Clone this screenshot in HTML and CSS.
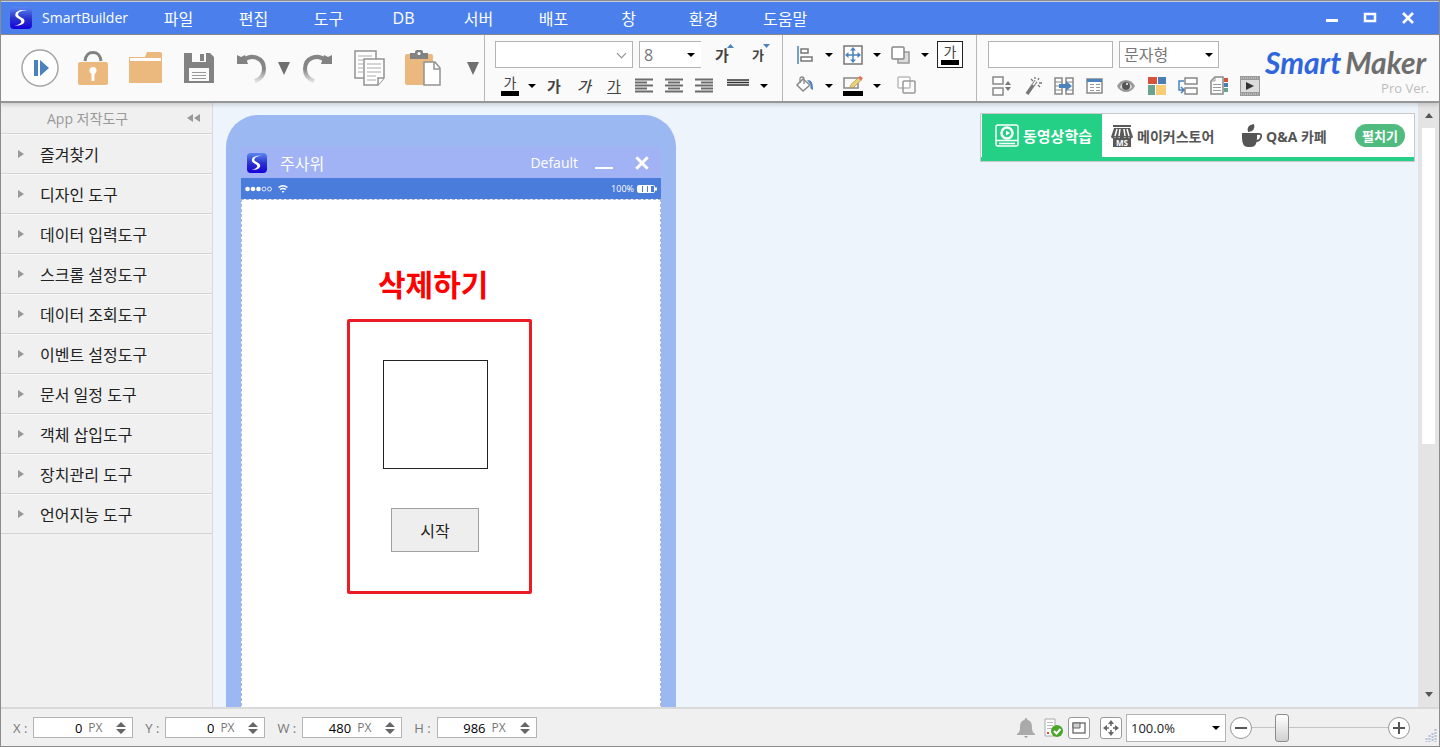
FILE: index.html
```html
<!DOCTYPE html>
<html lang="ko">
<head>
    <meta charset="UTF-8">
    <meta name="viewport" content="width=device-width, initial-scale=1.0">
    <title>SmartBuilder</title>
    <link rel="stylesheet" href="styles.css">
</head>
<body>
    <!-- Shared symbols -->
    <svg class="symbols" aria-hidden="true">
        <defs>
            <linearGradient id="logoFill" x1="0" y1="0" x2="0" y2="1">
                <stop offset="0" stop-color="#5b86f2"/>
                <stop offset="0.5" stop-color="#2a35cc"/>
                <stop offset="1" stop-color="#1600dc"/>
            </linearGradient>
            <linearGradient id="fadeDown" x1="0" y1="0" x2="0" y2="1">
                <stop offset="0.5" stop-color="#858585"/>
                <stop offset="1" stop-color="#dedede"/>
            </linearGradient>
            <symbol id="logo" viewBox="0 0 22 22">
                <rect width="22" height="22" rx="4" fill="url(#logoFill)"/>
                <path d="M17 3.500C11.500 3 8 5 8 7.500c0 2.500 6.500 3 6.500 6.500 0 3-4 5-10 4.500 4-.5 6.800-2 6.800-4.200 0-2.600-6-2.800-6-6.300C5.300 4.300 10.500 2 17 3.500z" fill="#fff"/>
            </symbol>
            <symbol id="close" viewBox="0 0 14 14">
                <path d="M2 2l10 10M12 2L2 12" stroke="#fff" stroke-width="2.600"/>
            </symbol>
        </defs>
    </svg>

    <div class="window">
        <!-- Title bar -->
        <header class="titlebar">
            <svg class="app-logo"><use href="#logo"/></svg>
            <h1 class="app-name">SmartBuilder</h1>
            <nav class="menu">
                <button class="menu-item">파일</button>
                <button class="menu-item">편집</button>
                <button class="menu-item">도구</button>
                <button class="menu-item">DB</button>
                <button class="menu-item">서버</button>
                <button class="menu-item">배포</button>
                <button class="menu-item">창</button>
                <button class="menu-item">환경</button>
                <button class="menu-item">도움말</button>
            </nav>
            <div class="window-controls">
                <button aria-label="최소화"><svg width="14" height="14"><path d="M1 9.500h12" stroke="#fff" stroke-width="3"/></svg></button>
                <button aria-label="최대화"><svg width="14" height="14"><rect x="2" y="3" width="10" height="7" fill="none" stroke="#fff" stroke-width="2.500"/></svg></button>
                <button aria-label="닫기"><svg width="14" height="14"><use href="#close"/></svg></button>
            </div>
        </header>

        <!-- Toolbar -->
        <div class="toolbar">
            <div class="tool-group group-main">
                <button class="tool-lg" aria-label="실행">
                    <svg width="38" height="38"><circle cx="19" cy="19" r="18" fill="#fff" stroke="#a6a6a6" stroke-width="1.500"/><path d="M13 11h4v16h-4zM19 11l9 8-9 8z" fill="#4a82bd"/></svg>
                </button>
                <button class="tool-lg" aria-label="잠금">
                    <svg width="32" height="36"><path d="M8 11C9 4 12 2.500 16 2.500S23 4 24 11" fill="none" stroke="#828282" stroke-width="3"/><rect x="1" y="12" width="30" height="23" rx="2" fill="#ebb97e"/><circle cx="16" cy="20.500" r="3.500" fill="#fff"/><path d="M14.500 22h3v9h-3z" fill="#fff"/></svg>
                </button>
                <button class="tool-lg" aria-label="열기">
                    <svg width="33" height="34"><path d="M0 6h16l2-5h13q2 0 2 2v29H0z" fill="#ebb97e"/><path d="M1 7h31v3H1z" fill="#fff"/></svg>
                </button>
                <button class="tool-lg" aria-label="저장">
                    <svg width="30" height="30"><path d="M0 0h26l4 4v26H0z" fill="#828282"/><path d="M8 0h14v9H8zM5 15h20v13H5z" fill="#fafafa"/><path d="M16 1h4v7h-4z" fill="#828282"/><path d="M8 19.500h14M8 22.500h14M8 25.500h14" stroke="#999"/></svg>
                </button>
                <button class="tool-lg" aria-label="실행 취소">
                    <svg width="30" height="30"><path d="M7 7C14 1 27 4 27 16c0 6-3 10-9 12" fill="none" stroke="url(#fadeDown)" stroke-width="4"/><path d="M0 2l4 2 4-2 3 9H0z" fill="#828282"/></svg>
                </button>
                <button class="tool-arrow" aria-label="실행 취소 목록"><svg width="12" height="13"><path d="M0 0h12L6 13z" fill="#6f6f6f"/></svg></button>
                <button class="tool-lg" aria-label="다시 실행">
                    <svg width="30" height="30"><path d="M23 7C16 1 3 4 3 16c0 6 3 10 9 12" fill="none" stroke="url(#fadeDown)" stroke-width="4"/><path d="M30 2l-4 2-4-2-3 9h11z" fill="#828282"/></svg>
                </button>
                <button class="tool-lg" aria-label="복사">
                    <svg width="31" height="36"><g fill="#fff" stroke="#929292" stroke-width="1.500"><path d="M1 1h21v27H1z"/><path d="M10 9h20v19l-6 7H10z"/><path d="M30 28h-6v7"/></g><path d="M4 6h14M4 10h5M4 14h5M4 18h5M4 22h5M13 14h14M13 18h14M13 22h14M13 26h9M13 30h9" stroke="#aaa"/></svg>
                </button>
                <button class="tool-lg" aria-label="붙여넣기">
                    <svg width="36" height="36"><rect x="0" y="4" width="28" height="31" rx="2" fill="#ebb97e"/><path d="M5 3h5V2q0-2 2-2h4q2 0 2 2v1h5v6H5z" fill="#828282"/><circle cx="14" cy="3.500" r="1.500" fill="#fff"/><path d="M19 12h11l5 6v17H19z" fill="#fff" stroke="#929292" stroke-width="1.500"/><path d="M29 12v7h6" fill="none" stroke="#929292" stroke-width="1.500"/></svg>
                </button>
                <button class="tool-arrow last" aria-label="붙여넣기 옵션"><svg width="12" height="13"><path d="M0 0h12L6 13z" fill="#6f6f6f"/></svg></button>
            </div>

            <!-- Text format -->
            <div class="tool-group group-text">
                <div class="tool-row">
                    <span class="drop drop-chevron font-name"><select aria-label="글꼴"><option></option></select></span>
                    <span class="drop font-size"><select aria-label="글꼴 크기"><option>8</option></select></span>
                    <button class="tool glyph glyph-bold resize" aria-label="글자 크게">가<svg width="7" height="4"><path d="M0 4h7L3.500 0z" fill="#4a82bd"/></svg></button>
                    <button class="tool glyph glyph-bold resize small" aria-label="글자 작게">가<svg width="7" height="4"><path d="M0 0h7L3.500 4z" fill="#4a82bd"/></svg></button>
                </div>
                <div class="tool-row tight">
                    <button class="tool glyph color-bar" aria-label="글자색">가</button>
                    <button class="caret" aria-label="글자색 선택"></button>
                    <button class="tool glyph glyph-bold" aria-label="굵게">가</button>
                    <button class="tool glyph glyph-italic" aria-label="기울임">가</button>
                    <button class="tool glyph" aria-label="밑줄"><u>가</u></button>
                    <button class="tool" aria-label="왼쪽 정렬"><svg width="18" height="16"><path d="M0 1.500h18M0 4.500h12M0 7.500h18M0 10.500h12M0 13.500h18" stroke="#6c6c6c" stroke-width="2"/></svg></button>
                    <button class="tool" aria-label="가운데 정렬"><svg width="18" height="16"><path d="M0 1.500h18M3 4.500h12M0 7.500h18M3 10.500h12M0 13.500h18" stroke="#6c6c6c" stroke-width="2"/></svg></button>
                    <button class="tool" aria-label="오른쪽 정렬"><svg width="18" height="16"><path d="M0 1.500h18M6 4.500h12M0 7.500h18M6 10.500h12M0 13.500h18" stroke="#6c6c6c" stroke-width="2"/></svg></button>
                    <button class="tool tool-wide" aria-label="선 모양"><svg width="22" height="14"><path d="M0 1h22M0 3.500h22M0 6h22" stroke="#333" stroke-width="1.500"/></svg></button>
                    <button class="caret" aria-label="선 모양 선택"></button>
                </div>
            </div>

            <!-- Object format -->
            <div class="tool-group group-object">
                <div class="tool-row tight">
                    <button class="tool" aria-label="맞춤"><svg width="18" height="18"><path d="M2 0v18" stroke="#4a82bd" stroke-width="1.500"/><path d="M5 3h7v4H5zM5 11h11v4H5z" fill="#fff" stroke="#777" stroke-width="1.500"/></svg></button>
                    <button class="caret" aria-label="맞춤 선택"></button>
                    <button class="tool" aria-label="크기 맞춤"><svg width="20" height="20"><rect x="1" y="1" width="18" height="18" fill="#fff" stroke="#777" stroke-width="1.500"/><path d="M10 4v12M4 10h12" stroke="#4a82bd" stroke-width="1.500"/><path d="M10 2l3 3.500H7zM10 18l3-3.500H7zM2 10l3.500-3v6zM18 10l-3.500-3v6z" fill="#4a82bd"/></svg></button>
                    <button class="caret" aria-label="크기 맞춤 선택"></button>
                    <button class="tool" aria-label="순서"><svg width="20" height="20"><rect x="7" y="7" width="11" height="11" fill="#ddd" stroke="#999" stroke-width="1.500"/><rect x="1" y="2" width="12" height="12" rx="1" fill="#fff" stroke="#888" stroke-width="1.500"/></svg></button>
                    <button class="caret" aria-label="순서 선택"></button>
                    <button class="tool glyph color-bar framed" aria-label="배경색">가</button>
                </div>
                <div class="tool-row tight">
                    <button class="tool" aria-label="채우기"><svg width="20" height="20"><path d="M8 3l7 6-7 6-6-6z" fill="#fff" stroke="#888" stroke-width="1.500"/><path d="M5 7V3q0-2 2-2t2 2v5" fill="none" stroke="#888" stroke-width="1.300"/><path d="M12 4c5 0 6 3 6 10-3-1-3-3-2-5z" fill="#4a82bd"/></svg></button>
                    <button class="caret" aria-label="채우기 선택"></button>
                    <button class="tool" aria-label="선 색"><svg width="20" height="20"><path d="M1 2h14v10H1z" fill="none" stroke="#888" stroke-width="1.500"/><path d="M7 12l1-3.500L16 1l3 2.500-8 7.500z" fill="#edd179" stroke="#a88f4c" stroke-width=".7"/><path d="M15 2l2-2 3 2-2 2.500z" fill="#dc7260"/><path d="M0 15h20v5H0z"/></svg></button>
                    <button class="caret" aria-label="선 색 선택"></button>
                    <button class="tool tool-object" aria-label="그룹"><svg width="20" height="20"><rect x="2" y="1" width="12" height="11" rx="1" fill="#fff" stroke="#bbb" stroke-width="1.500"/><rect x="7" y="5" width="12" height="12" rx="1" fill="none" stroke="#999" stroke-width="1.500"/></svg></button>
                </div>
            </div>

            <!-- Data and view -->
            <div class="tool-group group-data">
                <div class="tool-row">
                    <input class="name-input" type="text" aria-label="객체 이름">
                    <span class="drop data-type"><select aria-label="자료형"><option>문자형</option></select></span>
                </div>
                <div class="tool-row tight tool-strip">
                    <button class="tool-sm" aria-label="간격"><svg width="20" height="20"><path d="M1 1h10v7H1zM1 12h10v7H1z" fill="#fff" stroke="#888" stroke-width="1.500"/><path d="M13 9h6l-3-4zM13 11h6l-3 4z" fill="#777"/></svg></button>
                    <button class="tool-sm" aria-label="마법사"><svg width="18" height="20"><path d="M3 18L12 5" stroke="#777" stroke-width="3.500"/><path d="M9 9l3-4" stroke="#fff" stroke-width="1.500"/><path d="M7 3l2 2M11 1v2M15 2l-1 2M15 7h3M14 9l2 2" stroke="#777" stroke-width="1.300"/></svg></button>
                    <button class="tool-sm" aria-label="이동"><svg width="20" height="20"><path d="M1 2h7v16H1zM12 2h7v16h-7z" fill="#fff" stroke="#888" stroke-width="1.500"/><path d="M1 6h7M1 10h7M1 14h7M12 6h7M12 14h7" stroke="#888"/><path d="M5 8h7V5l6 5-6 5v-3H5z" fill="#4a82bd"/></svg></button>
                    <button class="tool-sm" aria-label="표"><svg width="18" height="18"><path d="M1 2h15v14H1z" fill="#fff" stroke="#888" stroke-width="1.500"/><path d="M1 3.500h15" stroke="#4a82bd" stroke-width="3"/><path d="M4 7.500h4M4 10.500h4M4 13.500h4M10 7.500h4M10 10.500h4M10 13.500h4" stroke="#999"/></svg></button>
                    <button class="tool-sm" aria-label="미리보기"><svg width="18" height="14"><path d="M0 7C4-1 14-1 18 7 14 15 4 15 0 7z" fill="#999"/><path d="M3 8C5 2 13 2 15 8c-2 4-10 4-12 0z" fill="#ddd"/><circle cx="9" cy="7" r="4" fill="#555"/><circle cx="10" cy="5" r="1" fill="#fff"/></svg></button>
                    <button class="tool-sm" aria-label="색상표"><svg width="18" height="18"><path d="M0 0h9v7H0z" fill="#d6523a"/><path d="M10 0h8v7h-8z" fill="#4a7eb5"/><path d="M0 8h7v10H0z" fill="#6aa38e"/><path d="M8 8h10v10H8z" fill="#f7cc74"/></svg></button>
                    <button class="tool-sm" aria-label="연결"><svg width="20" height="20"><path d="M7 2h12v6H7zM7 12h12v6H7z" fill="#fff" stroke="#888" stroke-width="1.500"/><path d="M6 5H1v9h4M3 11l3 3-3 3" fill="none" stroke="#4a82bd" stroke-width="1.500"/></svg></button>
                    <button class="tool-sm" aria-label="문서 정보"><svg width="18" height="20"><path d="M5 1h8v17H1V5z" fill="#fff" stroke="#888" stroke-width="1.500"/><path d="M5 1v4H1M3 8.500h8M3 11.500h8M3 14.500h8" fill="none" stroke="#999"/><path d="M14 2h4v4h-4z" fill="#d6523a"/><path d="M14 7h4v4h-4z" fill="#4a7eb5"/><path d="M14 12h4v4h-4z" fill="#6aa38e"/></svg></button>
                    <button class="tool-sm" aria-label="동영상"><svg width="20" height="20"><path d="M0 0h20v20H0z" fill="#999"/><path d="M1 4h18v12H1z" fill="#dcdcdc"/><path d="M1 2h18M1 18h18" stroke="#ddd" stroke-dasharray="1 1"/><path d="M6 6l8 4-8 4z" fill="#333"/></svg></button>
                </div>
            </div>

            <div class="brand">
                <div class="brand-name"><span class="brand-smart">Smart</span><span class="brand-maker">Maker</span></div>
                <div class="brand-edition">Pro Ver.</div>
            </div>
        </div>

        <div class="workspace">
            <!-- Tool palette -->
            <aside class="palette">
                <div class="palette-header">
                    <h2>App 저작도구</h2>
                    <button aria-label="접기"><svg width="14" height="8"><path d="M6 0v8L0 4zM13 0v8L7 4z" fill="#999"/></svg></button>
                </div>
                <button class="palette-item">즐겨찾기</button>
                <button class="palette-item">디자인 도구</button>
                <button class="palette-item">데이터 입력도구</button>
                <button class="palette-item">스크롤 설정도구</button>
                <button class="palette-item">데이터 조회도구</button>
                <button class="palette-item">이벤트 설정도구</button>
                <button class="palette-item">문서 일정 도구</button>
                <button class="palette-item">객체 삽입도구</button>
                <button class="palette-item">장치관리 도구</button>
                <button class="palette-item">언어지능 도구</button>
            </aside>

            <!-- Design canvas -->
            <main class="canvas">
                <section class="device">
                    <div class="form-title">
                        <svg class="form-logo"><use href="#logo"/></svg>
                        <span class="form-name">주사위</span>
                        <span class="form-layout">Default</span>
                        <button aria-label="최소화"><svg width="18" height="14"><path d="M0 12h18" stroke="#fff" stroke-width="2"/></svg></button>
                        <button aria-label="닫기"><svg width="16" height="16"><use href="#close"/></svg></button>
                    </div>
                    <div class="phone-status">
                        <svg width="44" height="12"><g fill="#fff"><circle cx="2.500" cy="6" r="2.300"/><circle cx="8" cy="6" r="2.300"/><circle cx="13.500" cy="6" r="2.300"/></g><g fill="none" stroke="#fff" stroke-width=".8"><circle cx="19" cy="6" r="2"/><circle cx="24.500" cy="6" r="2"/></g><path d="M33.500 4.500Q38 1 42.500 4.500M35 6.500q3-2 6 0" fill="none" stroke="#fff" stroke-width="1.400"/><path d="M36.500 8h3L38 10z" fill="#fff"/></svg>
                        <span class="battery">100%
                            <svg width="20" height="8"><rect x=".5" y=".5" width="17" height="7" rx="1" fill="none" stroke="#fff"/><path d="M1 1h4v6H1zM6 1h4v6H6zM11 1h3v6h-3zM18 2.500h2v3h-2z" fill="#fff"/></svg>
                        </span>
                    </div>
                    <div class="form">
                        <h2 class="note">삭제하기</h2>
                        <div class="note-frame"></div>
                        <div class="image-box"></div>
                        <button class="start-button">시작</button>
                    </div>
                </section>

                <nav class="banner">
                    <a class="banner-link video" href="#">
                        <svg width="24" height="24"><rect x="1" y="1" width="22" height="21" rx="2" fill="none" stroke="#fff" stroke-width="1.500"/><circle cx="12" cy="9" r="5.500" fill="none" stroke="#fff" stroke-width="2.500"/><path d="M11 6.500l4 2.500-4 2.500z" fill="#fff"/><path d="M1 16.500h22M4 19.500h16" stroke="#fff" stroke-width="1.300"/></svg>
                        동영상학습
                    </a>
                    <a class="banner-link store" href="#">
                        <svg width="22" height="22"><path d="M2 1h18" stroke="#595959" stroke-width="2"/><path d="M3 3h16l3 9q-2 3-4 0-2 3-4 0-3 3-6 0-2 3-4 0-2 3-4 0z" fill="#595959"/><path d="M6 4l-2 7M9 4l-1 7M13 4l1 7M16 4l2 7" stroke="#fff" stroke-width="1.500"/><path d="M2 13h18v9H2z" fill="#595959"/><text x="11" y="21" class="store-sign">MS</text></svg>
                        메이커스토어
                    </a>
                    <a class="banner-link cafe" href="#">
                        <svg width="20" height="24"><path d="M0 9h15v5q0 9-6 9H6q-6 0-6-9z" fill="#555"/><path d="M15 10q5-1 4 3-1 4-5 4" fill="none" stroke="#555" stroke-width="1.800"/><path d="M6 8Q4 1 12 0q2 7-6 8z" fill="#555"/></svg>
                        Q&amp;A 카페
                    </a>
                    <button class="banner-more">펼치기</button>
                </nav>
            </main>

            <div class="scrollbar">
                <button aria-label="위로"><svg width="8" height="5"><path d="M0 5h8L4 0z" fill="#555"/></svg></button>
                <div class="scroll-track"><div class="scroll-thumb"></div></div>
                <button aria-label="아래로"><svg width="8" height="5"><path d="M0 0h8L4 5z" fill="#555"/></svg></button>
            </div>
        </div>

        <!-- Status bar -->
        <footer class="statusbar">
            <div class="measure">
                <label for="posX">X :</label>
                <span class="measure-box"><input id="posX" type="text" value="0">PX<svg width="10" height="12"><path d="M0 5h10L5 0zM0 7h10l-5 5z" fill="#666"/></svg></span>
            </div>
            <div class="measure">
                <label for="posY">Y :</label>
                <span class="measure-box"><input id="posY" type="text" value="0">PX<svg width="10" height="12"><path d="M0 5h10L5 0zM0 7h10l-5 5z" fill="#666"/></svg></span>
            </div>
            <div class="measure">
                <label for="sizeW">W :</label>
                <span class="measure-box"><input id="sizeW" type="text" value="480">PX<svg width="10" height="12"><path d="M0 5h10L5 0zM0 7h10l-5 5z" fill="#666"/></svg></span>
            </div>
            <div class="measure">
                <label for="sizeH">H :</label>
                <span class="measure-box"><input id="sizeH" type="text" value="986">PX<svg width="10" height="12"><path d="M0 5h10L5 0zM0 7h10l-5 5z" fill="#666"/></svg></span>
            </div>

            <div class="status-tools">
                <button class="status-icon" aria-label="알림"><svg width="18" height="20"><path d="M9 0q1.500 0 1.500 2C15 3 15 7 15 11q0 3 3 5v1H0v-1q3-2 3-5c0-4 0-8 4.500-9Q7.500 0 9 0z" fill="#aaa"/><path d="M7 18h4l-2 2z" fill="#999"/></svg></button>
                <button class="status-icon" aria-label="검사"><svg width="20" height="20"><path d="M1 1h10v17H1z" fill="#fff" stroke="#aaa"/><path d="M3 4.500h6M3 7.500h6M3 10.500h6" stroke="#bbb"/><path d="M3 14h2v2H3z" fill="#e05030"/><circle cx="13" cy="13" r="6" fill="#4aa52c"/><path d="M10 13l2.500 2.500L16.500 11" fill="none" stroke="#fff" stroke-width="2"/></svg></button>
                <button class="status-button" aria-label="창 크기"><svg width="14" height="12"><rect x="1" y="1" width="12" height="10" fill="none" stroke="#666" stroke-width="1.300"/><path d="M1 1h7v5H1z" fill="#ccc" stroke="#666"/></svg></button>
                <button class="status-button pan" aria-label="이동"><svg width="16" height="16"><path d="M8 0l3 4H5zM8 16l3-4H5zM0 8l4-3v6zM16 8l-4-3v6z" fill="#666"/><path d="M8 4v2M8 10v2M4 8h2M10 8h2" stroke="#666" stroke-width="1.500"/></svg></button>
                <span class="drop zoom"><select aria-label="배율"><option>100.0%</option></select></span>
                <button class="zoom-button" aria-label="축소"><svg width="14" height="14"><path d="M1 7h12" stroke="#555" stroke-width="2"/></svg></button>
                <input class="zoom-slider" type="range" min="0" max="100" value="19" aria-label="확대 비율">
                <button class="zoom-button" aria-label="확대"><svg width="14" height="14"><path d="M1 7h12M7 1v12" stroke="#555" stroke-width="2"/></svg></button>
                <svg class="grip" width="14" height="14"><path d="M12.500 1v13M9.500 5v9M6.500 7v7M3.500 10v4" stroke="#b4bfd6" stroke-width="2" stroke-dasharray="2 1"/></svg>
            </div>
        </footer>
    </div>
</body>
</html>
```
FILE: styles.css
```css
* {
    margin: 0;
    padding: 0;
    box-sizing: border-box;
}

body {
    font-family: "Open Sans", "Noto Sans CJK KR", sans-serif;
    font-size: 16px;
    color: #222;
}

button {
    font: inherit;
    color: inherit;
    background: none;
    border: none;
    cursor: pointer;
}

input,
select {
    font: inherit;
    border-radius: 0;
}

svg {
    display: block;
    flex: none;
}

.symbols {
    position: absolute;
    width: 0;
    height: 0;
}

.window {
    display: flex;
    flex-direction: column;
    height: 100vh;
    border: 1px solid #8c8c8c;
    background: #f0f0f0;
    overflow: hidden;
}

/* Title bar */
.titlebar {
    display: flex;
    align-items: center;
    height: 34px;
    padding: 0 0 1px 9px;
    background: #4a7fec;
    border-top: 1px solid #c4cde0;
    border-bottom: 1px solid #8c8c8c;
    color: #fff;
}

.app-logo {
    width: 22px;
    height: 22px;
}

.app-name {
    width: 99px;
    margin-left: 10px;
    font-size: 14px;
    font-weight: 400;
}

.menu {
    display: flex;
    flex: 1;
    font-size: 16px;
}

.menu-item {
    min-width: 75px;
    padding: 0 22px;
}

.window-controls {
    display: flex;
    gap: 24px;
    padding-right: 24px;
}

/* Toolbar */
.toolbar {
    display: flex;
    position: relative;
    height: 68px;
    background: #fafafa;
    border-bottom: 2px solid #969696;
    box-shadow: 0 2px 4px rgba(0, 0, 0, 0.15);
}

.tool-group {
    flex: none;
    border-right: 1px solid #b8b8b8;
}

.group-main {
    display: flex;
    align-items: center;
    width: 484px;
    padding: 0 5px 0 12px;
}

.group-text,
.group-object,
.group-data {
    display: flex;
    flex-direction: column;
    gap: 4px;
    padding-top: 6px;
}

.group-text {
    width: 298px;
    padding-left: 10px;
}

.group-object {
    width: 194px;
    padding-left: 5px;
}

.group-data {
    border-right: none;
    padding-left: 11px;
}

.tool-lg,
.tool,
.tool-sm,
.tool-arrow {
    display: flex;
    align-items: center;
    justify-content: center;
}

.tool-lg {
    width: 53px;
    height: 44px;
}

.tool-arrow.last {
    margin-left: auto;
}

.tool-row {
    display: flex;
    align-items: center;
    gap: 6px;
    height: 27px;
}

.tool-row.tight {
    gap: 0;
}

.tool-strip {
    margin-left: -2px;
}

.tool {
    width: 30px;
    height: 27px;
}

.group-object .tool {
    width: 34px;
}

.group-object .tool-object {
    width: 44px;
}

.tool-sm {
    width: 31px;
    height: 27px;
}

.tool-wide {
    width: 38px;
}

.glyph {
    font-size: 15px;
    line-height: 20px;
    color: #444;
}

.glyph-bold {
    font-weight: 700;
}

.glyph-italic {
    font-style: italic;
    font-weight: 500;
}

/* Glyph with a small arrow over its top right corner */
.resize {
    position: relative;
}

.resize svg {
    position: absolute;
    top: 3px;
    right: 3px;
}

.small {
    font-size: 13px;
}

.color-bar {
    flex-direction: column;
    gap: 1px;
    line-height: 14px;
    font-size: 14px;
}

.color-bar::after {
    content: "";
    width: 18px;
    height: 5px;
    background: #000;
}

.group-object .framed {
    width: 26px;
    margin-left: 5px;
    border: 1px solid #222;
    background: #fff;
}

.caret {
    width: 14px;
    height: 20px;
    display: flex;
    align-items: center;
    justify-content: center;
}

.caret::before,
.drop::after {
    content: "";
    border: 4px solid transparent;
    border-top-color: #000;
    border-bottom: none;
}

.drop {
    position: relative;
    display: block;
    height: 27px;
}

.drop select {
    appearance: none;
    width: 100%;
    height: 100%;
    padding: 0 4px;
    background: #fff;
    border: 1px solid #b4b4b4;
    color: #777;
}

.drop::after {
    position: absolute;
    right: 6px;
    top: 50%;
    margin-top: -2px;
    pointer-events: none;
}

.drop-chevron::after {
    width: 6px;
    height: 6px;
    margin-top: -5px;
    right: 8px;
    border: solid #888;
    border-width: 0 1px 1px 0;
    transform: rotate(45deg);
}

.font-name {
    width: 138px;
}

.font-size {
    width: 62px;
}

.font-size select {
    border-right: none;
}

.name-input {
    width: 125px;
    height: 27px;
    border: 1px solid #b4b4b4;
    background: #fff;
}

.data-type {
    width: 100px;
}

.brand {
    margin-left: auto;
    padding: 8px 12px 0 0;
    text-align: right;
}

.brand-name {
    padding-right: 3px;
    font-family: Lato, sans-serif;
    font-size: 30px;
    font-style: italic;
    font-weight: 700;
    line-height: 38px;
}

.brand-smart {
    margin-right: 4px;
    color: #2f66e0;
}

.brand-maker {
    color: #6e6e6e;
}

.brand-edition {
    font-size: 13px;
    line-height: 14px;
    color: #bdbdbd;
}

/* Workspace */
.workspace {
    display: flex;
    flex: 1;
    min-height: 0;
}

.palette {
    flex: none;
    width: 212px;
    border-right: 1px solid #d9d9d9;
}

.palette-header {
    display: flex;
    align-items: center;
    justify-content: space-between;
    height: 31px;
    padding: 0 11px 0 46px;
    border-bottom: 1px solid #d4d4d4;
}

.palette-header h2 {
    font-size: 14px;
    font-weight: 400;
    color: #999;
}

.palette-item {
    display: flex;
    align-items: center;
    width: 100%;
    height: 40px;
    padding-left: 17px;
    border-top: 1px solid #fafafa;
    border-bottom: 1px solid #d4d4d4;
}

.palette-item::before {
    content: "";
    margin-right: 16px;
    border: 4px solid transparent;
    border-left: 6px solid #999;
    border-right: none;
}

.canvas {
    display: flex;
    flex: 1;
    align-items: flex-start;
    justify-content: space-between;
    min-width: 0;
    padding: 10px 3px 0 13px;
    background: #edf4fc;
    overflow: hidden;
}

.device {
    flex: none;
    width: 450px;
    margin-top: 2px;
    padding: 32px 15px 0;
    border-radius: 32px;
    background: #9cb8f2;
}

.form-title {
    display: flex;
    align-items: center;
    height: 31px;
    padding: 0 11px 0 6px;
    background: #a1b2f5;
    color: #fff;
}

.form-logo {
    width: 20px;
    height: 20px;
}

.form-name {
    flex: 1;
    margin-left: 13px;
}

.form-layout {
    font-size: 14px;
}

.form-title button {
    margin-left: 17px;
}

.form-title button + button {
    margin-left: 21px;
}

.phone-status {
    display: flex;
    align-items: center;
    justify-content: space-between;
    height: 21px;
    padding: 0 4px;
    background: #4a7cdc;
    color: #fff;
    font-size: 9px;
}

.battery {
    display: flex;
    align-items: center;
    gap: 3px;
}

/* Form objects are placed freely by the user */
.form {
    position: relative;
    height: 986px;
    background: #fff;
    border: 1px dashed #a9b4dc;
}

.note {
    position: absolute;
    left: 136px;
    top: 63px;
    font-size: 30px;
    line-height: 44px;
    color: #f00;
}

.note-frame {
    position: absolute;
    left: 105px;
    top: 119px;
    width: 185px;
    height: 275px;
    border: 3px solid #ed1c24;
    border-radius: 2px;
}

.image-box {
    position: absolute;
    left: 141px;
    top: 160px;
    width: 105px;
    height: 109px;
    border: 1px solid #222;
}

.start-button {
    position: absolute;
    left: 149px;
    top: 308px;
    width: 88px;
    height: 44px;
    background: #eee;
    border: 1px solid #a0a0a0;
}

/* Banner */
.banner {
    display: flex;
    align-items: center;
    width: 435px;
    height: 49px;
    background: #fff;
    border: 1px solid #c8c8c8;
    box-shadow: inset 0 -4px #23d086;
    font-size: 14px;
    font-weight: 700;
    padding: 0 9px 4px 1px;
}

.banner-link {
    display: flex;
    align-items: center;
    gap: 4px;
    height: 100%;
    color: #555;
    text-decoration: none;
    white-space: nowrap;
}

.video {
    width: 120px;
    padding-left: 13px;
    background: #23d086;
    color: #fff;
    font-size: 15px;
}

.store {
    width: 140px;
    padding-left: 9px;
}

.store-sign {
    font-size: 8px;
    fill: #fff;
    text-anchor: middle;
}

.banner-more {
    width: 50px;
    height: 23px;
    margin-left: auto;
    border-radius: 12px;
    background: #4fbb7e;
    color: #fff;
    font-size: 13px;
    line-height: 20px;
}

/* Scrollbar */
.scrollbar {
    display: flex;
    flex-direction: column;
    flex: none;
    width: 21px;
    background: #e4e4e4;
}

.scrollbar button {
    display: flex;
    align-items: center;
    justify-content: center;
    height: 25px;
}

.scroll-track {
    flex: 1;
    padding: 0 4px;
}

.scroll-thumb {
    height: 57%;
    background: #fff;
}

/* Status bar */
.statusbar {
    display: flex;
    align-items: center;
    height: 39px;
    padding: 0 2px 0 12px;
    gap: 12px;
    border-top: 2px solid #d9d9d9;
    font-size: 13px;
    color: #777;
}

.measure {
    display: flex;
    align-items: center;
    gap: 6px;
}

.measure-box {
    display: flex;
    align-items: center;
    width: 100px;
    height: 21px;
    padding-right: 6px;
    background: #fff;
    border: 1px solid #b4b4b4;
    font-size: 12px;
}

.measure-box input {
    width: 48px;
    margin-right: 6px;
    border: none;
    background: none;
    text-align: right;
    font-size: 13px;
    color: #000;
}

.measure-box svg {
    margin-left: auto;
}

.status-tools {
    display: flex;
    align-items: center;
    margin-left: auto;
}

.status-icon {
    width: 28px;
    display: flex;
    justify-content: center;
}

.status-button,
.zoom-button {
    display: flex;
    align-items: center;
    justify-content: center;
    flex: none;
    width: 22px;
    height: 22px;
    background: #fff;
    border: 1px solid #999;
    border-radius: 3px;
}

.pan {
    margin-left: 10px;
}

.zoom {
    width: 100px;
    height: 28px;
    margin: 0 4px;
}

.zoom select {
    color: #222;
}

.zoom-button {
    border-radius: 50%;
}

.zoom-slider {
    appearance: none;
    width: 136px;
    height: 28px;
    background: linear-gradient(#c4c4c4, #c4c4c4) center / 100% 1px no-repeat;
}

.zoom-slider::-webkit-slider-thumb {
    appearance: none;
    width: 14px;
    height: 28px;
    border: 1px solid #8c8c8c;
    border-radius: 3px;
    background: linear-gradient(#fff, #d0d0d0);
}

.grip {
    align-self: flex-end;
    margin-left: 13px;
}
```
